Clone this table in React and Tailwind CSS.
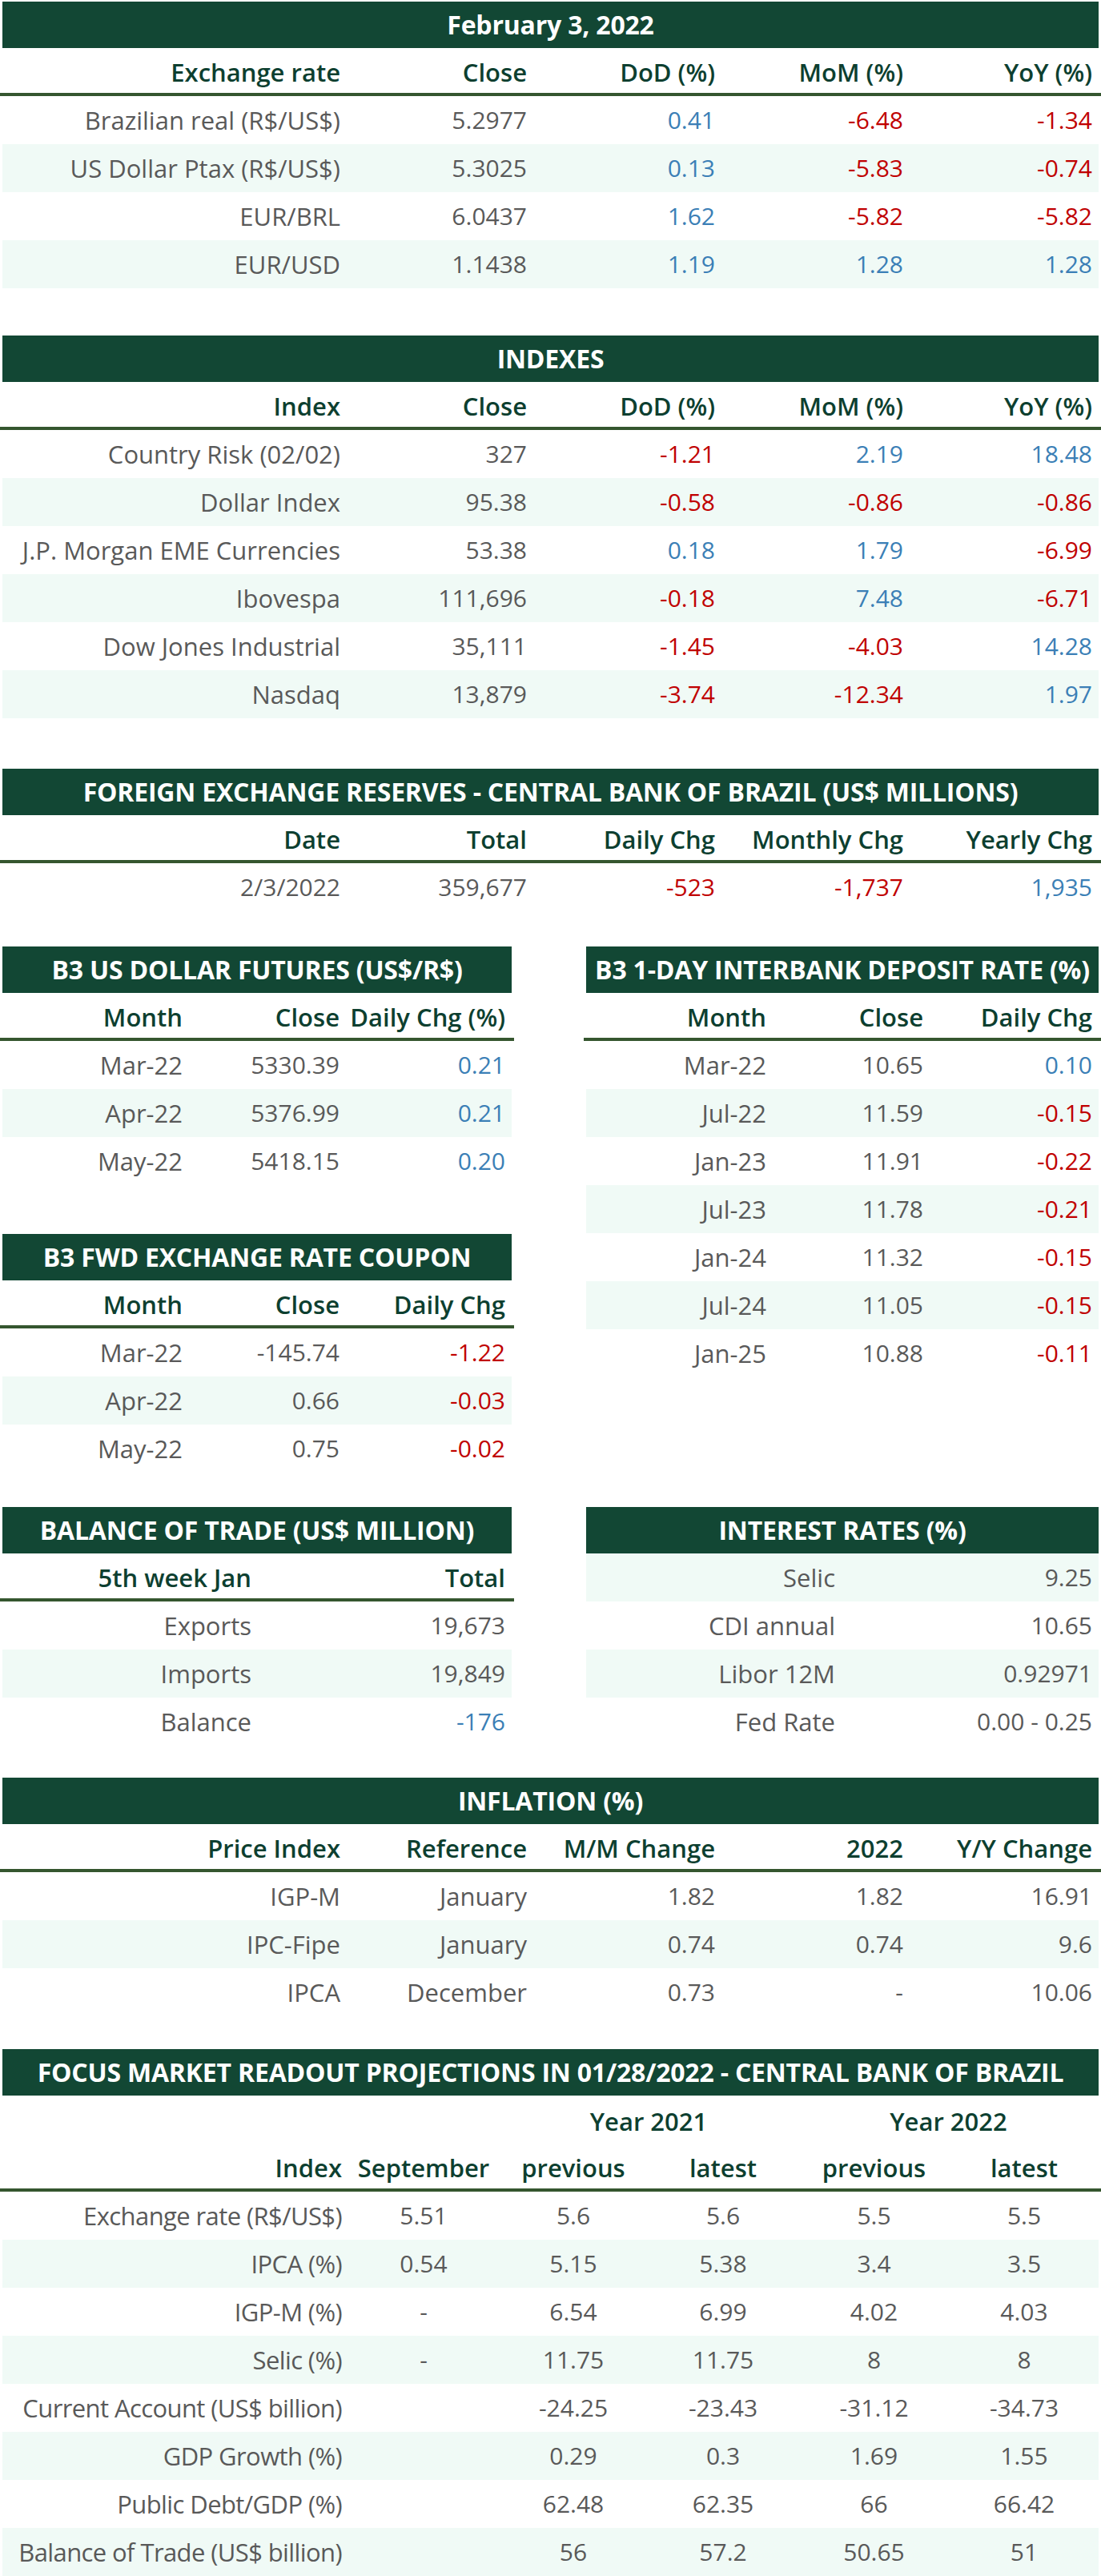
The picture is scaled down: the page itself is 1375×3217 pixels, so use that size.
import React from 'react';

const FIVE = 'grid grid-cols-[430px_233px_235px_235px_236px]';
const THREE = 'grid grid-cols-[233px_196px_1fr]';
const TWO = 'grid grid-cols-[319px_1fr]';
const FOCUS = 'grid grid-cols-[432px_188px_186px_188px_189px_1fr]';

const tone = {
  b: 'text-[#3b7fb6]',
  r: 'text-[#c00000]',
  g: 'text-[#595959]'
};

const size = (text) => (/[A-Za-z]/.test(text) ? 'text-[31px]' : 'text-[30px]');

function Bar({ title }) {
  return (
    <div className="px-[3px] pt-[2px]">
      <div className="h-[58px] bg-[#124734] flex items-center justify-center text-white font-bold text-[32px] tracking-[-0.2px] whitespace-nowrap">
        {title}
      </div>
    </div>
  );
}

function Head({ grid, cells, center = [] }) {
  return (
    <div className="h-[60px] border-b-4 border-[#35562f] px-[3px]">
      <div className={`${grid} h-full`}>
        {cells.map((cell, i) => (
          <div
            key={i}
            className={`flex items-center pt-[4px] font-semibold text-[31px] text-[#0d3f30] whitespace-nowrap ${center.includes(i) ? 'justify-center' : 'justify-end pr-[8px]'}`}
          >
            {cell}
          </div>
        ))}
      </div>
    </div>
  );
}

function Row({ grid, cells, shade, center = [], tight = false }) {
  return (
    <div className="h-[60px] px-[3px]">
      <div className={`${grid} h-full ${shade ? 'bg-[#f0faf6]' : ''}`}>
        {cells.map((cell, i) => {
          const item = typeof cell === 'object' ? cell : { v: cell, c: 'g' };
          return (
            <div
              key={i}
              className={`flex items-center whitespace-nowrap ${size(item.v)} ${tone[item.c]} ${tight && i === 0 ? 'tracking-[-0.6px]' : ''} ${center.includes(i) ? 'justify-center' : 'justify-end pr-[8px]'}`}
            >
              {item.v}
            </div>
          );
        })}
      </div>
    </div>
  );
}

function Table({ title, grid, head, rows, center, firstShade = false }) {
  return (
    <div>
      <Bar title={title} />
      {head && <Head grid={grid} cells={head} center={center} />}
      {rows.map((cells, i) => (
        <Row key={i} grid={grid} cells={cells} center={center} shade={firstShade ? i % 2 === 0 : i % 2 === 1} />
      ))}
    </div>
  );
}

const b = (v) => ({ v, c: 'b' });
const r = (v) => ({ v, c: 'r' });

const exchange = [
  ['Brazilian real (R$/US$)', '5.2977', b('0.41'), r('-6.48'), r('-1.34')],
  ['US Dollar Ptax (R$/US$)', '5.3025', b('0.13'), r('-5.83'), r('-0.74')],
  ['EUR/BRL', '6.0437', b('1.62'), r('-5.82'), r('-5.82')],
  ['EUR/USD', '1.1438', b('1.19'), b('1.28'), b('1.28')]
];

const indexes = [
  ['Country Risk (02/02)', '327', r('-1.21'), b('2.19'), b('18.48')],
  ['Dollar Index', '95.38', r('-0.58'), r('-0.86'), r('-0.86')],
  ['J.P. Morgan EME Currencies', '53.38', b('0.18'), b('1.79'), r('-6.99')],
  ['Ibovespa', '111,696', r('-0.18'), b('7.48'), r('-6.71')],
  ['Dow Jones Industrial', '35,111', r('-1.45'), r('-4.03'), b('14.28')],
  ['Nasdaq', '13,879', r('-3.74'), r('-12.34'), b('1.97')]
];

const futures = [
  ['Mar-22', '5330.39', b('0.21')],
  ['Apr-22', '5376.99', b('0.21')],
  ['May-22', '5418.15', b('0.20')]
];

const coupon = [
  ['Mar-22', '-145.74', r('-1.22')],
  ['Apr-22', '0.66', r('-0.03')],
  ['May-22', '0.75', r('-0.02')]
];

const interbank = [
  ['Mar-22', '10.65', b('0.10')],
  ['Jul-22', '11.59', r('-0.15')],
  ['Jan-23', '11.91', r('-0.22')],
  ['Jul-23', '11.78', r('-0.21')],
  ['Jan-24', '11.32', r('-0.15')],
  ['Jul-24', '11.05', r('-0.15')],
  ['Jan-25', '10.88', r('-0.11')]
];

const inflation = [
  ['IGP-M', 'January', '1.82', '1.82', '16.91'],
  ['IPC-Fipe', 'January', '0.74', '0.74', '9.6'],
  ['IPCA', 'December', '0.73', '-', '10.06']
];

const focus = [
  ['Exchange rate (R$/US$)', '5.51', '5.6', '5.6', '5.5', '5.5'],
  ['IPCA (%)', '0.54', '5.15', '5.38', '3.4', '3.5'],
  ['IGP-M (%)', '-', '6.54', '6.99', '4.02', '4.03'],
  ['Selic (%)', '-', '11.75', '11.75', '8', '8'],
  ['Current Account (US$ billion)', '', '-24.25', '-23.43', '-31.12', '-34.73'],
  ['GDP Growth (%)', '', '0.29', '0.3', '1.69', '1.55'],
  ['Public Debt/GDP (%)', '', '62.48', '62.35', '66', '66.42'],
  ['Balance of Trade (US$ billion)', '', '56', '57.2', '50.65', '51']
];

export default function App() {
  return (
    <div className="w-[1375px] bg-white leading-none text-[#595959] font-['Open_Sans','Liberation_Sans',sans-serif]">
      <Table
        title="February 3, 2022"
        grid={FIVE}
        head={['Exchange rate', 'Close', 'DoD (%)', 'MoM (%)', 'YoY (%)']}
        rows={exchange}
      />

      <div className="mt-[57px]">
        <Table
          title="INDEXES"
          grid={FIVE}
          head={['Index', 'Close', 'DoD (%)', 'MoM (%)', 'YoY (%)']}
          rows={indexes}
        />
      </div>

      <div className="mt-[61px]">
        <Table
          title="FOREIGN EXCHANGE RESERVES - CENTRAL BANK OF BRAZIL (US$ MILLIONS)"
          grid={FIVE}
          head={['Date', 'Total', 'Daily Chg', 'Monthly Chg', 'Yearly Chg']}
          rows={[['2/3/2022', '359,677', r('-523'), r('-1,737'), b('1,935')]]}
        />
      </div>

      <div className="mt-[42px] grid grid-cols-[642px_87px_646px] items-start">
        <div>
          <Table
            title="B3 US DOLLAR FUTURES (US$/R$)"
            grid={THREE}
            head={['Month', 'Close', 'Daily Chg (%)']}
            rows={futures}
          />
          <div className="mt-[59px]">
            <Table
              title="B3 FWD EXCHANGE RATE COUPON"
              grid={THREE}
              head={['Month', 'Close', 'Daily Chg']}
              rows={coupon}
            />
          </div>
        </div>
        <div />
        <Table
          title="B3 1-DAY INTERBANK DEPOSIT RATE (%)"
          grid={THREE}
          head={['Month', 'Close', 'Daily Chg']}
          rows={interbank}
        />
      </div>

      <div className="mt-[41px] grid grid-cols-[642px_87px_646px] items-start">
        <Table
          title="BALANCE OF TRADE (US$ MILLION)"
          grid={TWO}
          head={['5th week Jan', 'Total']}
          rows={[['Exports', '19,673'], ['Imports', '19,849'], ['Balance', b('-176')]]}
        />
        <div />
        <Table
          title="INTEREST RATES (%)"
          grid={TWO}
          rows={[['Selic', '9.25'], ['CDI annual', '10.65'], ['Libor 12M', '0.92971'], ['Fed Rate', '0.00 - 0.25']]}
          firstShade
        />
      </div>

      <div className="mt-[38px]">
        <Table
          title="INFLATION (%)"
          grid={FIVE}
          head={['Price Index', 'Reference', 'M/M Change', '2022', 'Y/Y Change']}
          rows={inflation}
        />
      </div>

      <div className="mt-[39px]">
        <Bar title="FOCUS MARKET READOUT PROJECTIONS IN 01/28/2022 - CENTRAL BANK OF BRAZIL" />
        <div className="h-[60px] px-[3px]">
          <div className={`${FOCUS} h-full font-semibold text-[31px] text-[#0d3f30]`}>
            <div className="col-start-3 col-span-2 flex items-center justify-center pt-[4px]">Year 2021</div>
            <div className="col-span-2 flex items-center justify-center pt-[4px]">Year 2022</div>
          </div>
        </div>
        <Head
          grid={FOCUS}
          cells={['Index', 'September', 'previous', 'latest', 'previous', 'latest']}
          center={[1, 2, 3, 4, 5]}
        />
        {focus.map((cells, i) => (
          <Row key={i} grid={FOCUS} cells={cells} center={[1, 2, 3, 4, 5]} shade={i % 2 === 1} tight />
        ))}
      </div>
    </div>
  );
}
